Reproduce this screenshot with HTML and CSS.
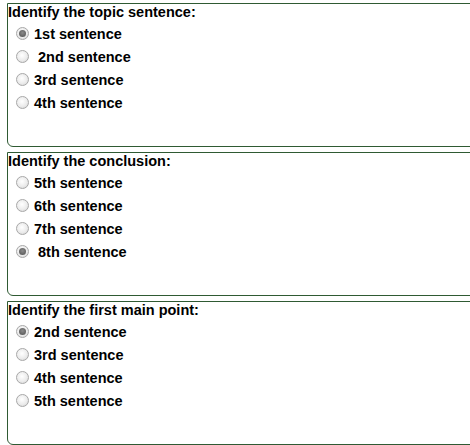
FILE: index.html
```html
<!DOCTYPE html>
<html>
<head>
<meta charset="utf-8">
<link rel="stylesheet" href="styles.css">
</head>
<body>
<div class="quiz">
  <fieldset class="question">
    <div class="prompt">Identify the topic sentence:</div>
    <label class="option"><input type="radio" name="q1" checked><span>1st sentence</span></label>
    <label class="option"><input type="radio" name="q1"><span>&nbsp;2nd sentence</span></label>
    <label class="option"><input type="radio" name="q1"><span>3rd sentence</span></label>
    <label class="option"><input type="radio" name="q1"><span>4th sentence</span></label>
  </fieldset>
  <fieldset class="question">
    <div class="prompt">Identify the conclusion:</div>
    <label class="option"><input type="radio" name="q2"><span>5th sentence</span></label>
    <label class="option"><input type="radio" name="q2"><span>6th sentence</span></label>
    <label class="option"><input type="radio" name="q2"><span>7th sentence</span></label>
    <label class="option"><input type="radio" name="q2" checked><span>&nbsp;8th sentence</span></label>
  </fieldset>
  <fieldset class="question">
    <div class="prompt">Identify the first main point:</div>
    <label class="option"><input type="radio" name="q3" checked><span>2nd sentence</span></label>
    <label class="option"><input type="radio" name="q3"><span>3rd sentence</span></label>
    <label class="option"><input type="radio" name="q3"><span>4th sentence</span></label>
    <label class="option"><input type="radio" name="q3"><span>5th sentence</span></label>
  </fieldset>
</div>
</body>
</html>
```

FILE: styles.css
```css
html, body {
  margin: 0;
  padding: 0;
  background: #ffffff;
  overflow: hidden;
}
body {
  font-family: "Liberation Sans", Arial, sans-serif;
  font-size: 14.5px;
  font-weight: bold;
  color: #000;
}
.quiz {
  display: flex;
  flex-direction: column;
  gap: 5px;
  padding: 3px 0 0 7px;
  width: 480px;
}
.question {
  margin: 0;
  padding: 0 0 0 8px;
  min-width: 0;
  height: 142px;
  border: 1px solid #2f5a33;
  border-radius: 0 0 0 6px;
  display: flex;
  flex-direction: column;
  box-sizing: content-box;
}
.prompt {
  margin-left: -8px;
  line-height: 16px;
  height: 16px;
  margin-bottom: 2px;
}
.option {
  display: flex;
  align-items: center;
  height: 23px;
  gap: 5px;
}
.option input {
  appearance: none;
  -webkit-appearance: none;
  margin: 0;
  width: 13px;
  height: 13px;
  border-radius: 50%;
  border: 1px solid #a8a8a8;
  background: radial-gradient(circle at 45% 40%, #ffffff 0%, #ececec 55%, #cfcfcf 100%);
  box-sizing: border-box;
  flex: none;
  position: relative;
}
.option input:checked::after {
  content: "";
  position: absolute;
  left: 2px;
  top: 2px;
  width: 7px;
  height: 7px;
  border-radius: 50%;
  background: radial-gradient(circle at 50% 40%, #8a8a8a 0%, #505050 100%);
}
```
